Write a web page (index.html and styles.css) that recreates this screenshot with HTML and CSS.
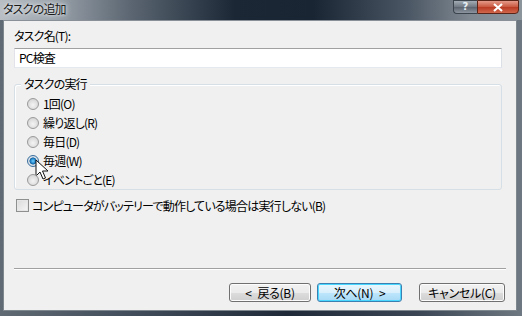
FILE: index.html
```html
<!DOCTYPE html>
<html>
<head>
  <title>タスクの追加</title>
  <link rel="stylesheet" href="styles.css">
</head>
<body>
  <div class="window">
    <div class="titlebar">
      <span class="title">タスクの追加</span>
      <div class="caption">
        <span class="cap-help">?</span>
        <span class="cap-close">
          <svg width="14" height="9" viewBox="0 0 14 9"><path d="M3 1 L11 8 M11 1 L3 8" stroke="#fff" stroke-width="2.2"/></svg>
        </span>
      </div>
    </div>

    <div class="body">
      <label class="field-label">タスク名(T):</label>
      <div class="textbox">PC検査</div>

      <div class="group">
        <span class="legend">タスクの実行</span>
        <div class="option"><span class="radio"></span>1回(O)</div>
        <div class="option"><span class="radio"></span>繰り返し(R)</div>
        <div class="option"><span class="radio"></span>毎日(D)</div>
        <div class="option"><span class="radio checked"></span>毎週(W)
          <svg class="cursor" width="14" height="22" viewBox="0 0 14 22"><path d="M1 1 L1 17 L5 13 L8 20 L10.5 19 L7.5 12 L13 12 Z" fill="#fff" stroke="#111" stroke-width="1"/></svg>
        </div>
        <div class="option"><span class="radio"></span>イベントごと(E)</div>
      </div>

      <div class="check-row"><span class="checkbox"></span>コンピュータがバッテリーで動作している場合は実行しない(B)</div>

      <div class="footer">
        <div class="separator"></div>
        <div class="buttons">
          <button class="btn back">&lt;&ensp;戻る(B)</button>
          <button class="btn default">次へ(N)&ensp;&gt;</button>
          <button class="btn cancel">キャンセル(C)</button>
        </div>
      </div>
    </div>
  </div>
</body>
</html>
```

FILE: styles.css
```css
html, body { margin: 0; padding: 0; }
body { width: 522px; height: 316px; overflow: hidden; font-family: "Noto Sans CJK JP", "Noto Sans", sans-serif; font-size: 12px; color: #000; letter-spacing: -0.8px; }

.window { height: 316px; display: flex; flex-direction: column; background: linear-gradient(90deg, #5f6a74 0%, #3c4856 30%, #1e2a38 55%, #3a4654 80%, #6e7882 100%); }

.titlebar { height: 20px; display: flex; align-items: flex-start; justify-content: space-between; background: linear-gradient(90deg, #b8bec4 0%, #9ca4ac 10%, #5b6672 25%, #1c2736 45%, #1a2534 60%, #4b5664 78%, #7f8891 90%, #8c949c 100%); }
.title { padding: 1px 0 0 3px; line-height: 16px; font-size: 12px; color: #1a1a1a; text-shadow: 0 0 6px #e8ecef, 0 0 3px #e8ecef; font-feature-settings: "palt"; }

.caption { display: flex; margin-right: 3px; height: 13px; letter-spacing: 0; }
.cap-help { width: 23px; height: 12px; border: 1px solid #3b434c; border-right: none; border-radius: 0 0 0 4px; background: linear-gradient(#a3abb4, #6f7882 50%, #5b646e 51%, #8d96a0); color: #e8eef4; font-size: 10px; font-weight: bold; line-height: 11px; text-align: center; font-family: "DejaVu Sans", sans-serif; }
.cap-close { width: 40px; height: 12px; border: 1px solid #5a2418; border-radius: 0 0 4px 0; background: linear-gradient(#e49a88, #c9573f 50%, #b93a22 51%, #d0674c); display: flex; align-items: center; justify-content: center; }

.body { flex: 1; margin: 0 5px 5px 3px; background: #f0f0f0; border: 1px solid #7e868e; border-top: 1px solid #8a9098; padding: 8px 14px 0 10px; display: flex; flex-direction: column; }

.field-label { line-height: 14px; font-feature-settings: "palt"; }
.textbox { margin-top: 5px; height: 18px; background: #fff; border-top: 1px solid #a0a0a0; border-left: 1px solid #e2e3ea; border-right: 1px solid #dbdfe6; border-bottom: 1px solid #e3e9ef; padding: 0 4px; line-height: 18px; }

.group { position: relative; box-sizing: border-box; margin-top: 16px; height: 106px; border: 1px solid #d5dfe5; border-radius: 3px; padding: 9px 0 0 10px; box-shadow: inset 1px 1px 0 #fff; }
.legend { position: absolute; top: -9px; left: 6px; background: #f0f0f0; padding: 0 3px; line-height: 16px; font-feature-settings: "palt"; }

.option { position: relative; display: flex; align-items: center; height: 19px; font-feature-settings: "palt"; }
.radio { width: 12px; height: 12px; margin: 0 4px 0 2px; border-radius: 50%; border: 1px solid #9a9a9a; background: radial-gradient(circle at 50% 60%, #f4f4f4 0%, #d8d8d8 70%, #c4c4c4 100%); box-sizing: border-box; flex: none; }
.radio.checked { border-color: #3c6e9c; background: radial-gradient(circle, #6fd0ff 0%, #1f7fc4 35%, #165c94 45%, #dde6ee 55%, #c8d2dc 100%); }
.cursor { position: absolute; left: 10px; top: 8px; }

.check-row { display: flex; align-items: center; margin-top: 7px; margin-left: 2px; height: 16px; font-feature-settings: "palt"; }
.checkbox { width: 11px; height: 11px; margin-right: 3px; border: 1px solid #8e8f8f; background: linear-gradient(135deg, #dadada, #f6f6f6); box-shadow: inset 0 0 0 1px #e6e6e6; flex: none; }

.footer { margin-top: auto; padding-bottom: 8px; }
.separator { height: 1px; background: #a0a0a0; border-bottom: 1px solid #fff; margin-right: -4px; }
.buttons { display: flex; justify-content: flex-end; gap: 6px; margin-top: 13px; margin-right: -3px; }
.btn { width: 82px; height: 19px; padding: 0; font-family: inherit; font-size: 12px; letter-spacing: -0.3px; line-height: 15px; border: 1px solid #707070; border-radius: 3px; background: linear-gradient(#f2f2f2 0%, #ebebeb 50%, #dddddd 51%, #cfcfcf 100%); box-shadow: inset 0 0 0 1px #fcfcfc; color: #000; font-feature-settings: "palt"; }
.btn.default { width: 85px; border-color: #3c7fb1; background: linear-gradient(#eaf6fd 0%, #d9f0fc 50%, #bee6fd 51%, #a7d9f5 100%); box-shadow: inset 0 0 0 1px #48d8ff; margin-right: 11px; }
.btn.cancel { width: 86px; }
```
